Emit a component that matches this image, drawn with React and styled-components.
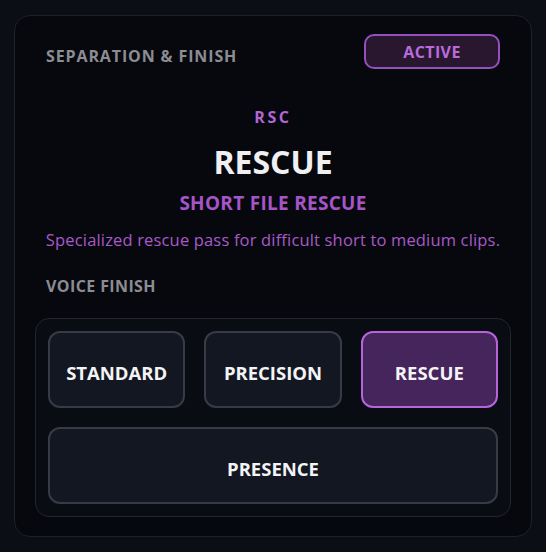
import React from "react";
import styled, { createGlobalStyle } from "styled-components";

const GlobalStyle = createGlobalStyle`
  html, body {
    margin: 0;
    padding: 0;
    background: #0b0e15;
  }
  body {
    font-family: "Open Sans", "Noto Sans", "DejaVu Sans", sans-serif;
    -webkit-font-smoothing: antialiased;
  }
  #root {
    padding: 15px 14px;
  }
`;

const Card = styled.section`
  box-sizing: border-box;
  width: 518px;
  background: #06080d;
  border: 1px solid #1d2129;
  border-radius: 16px;
  padding: 18px 20px 19px;
  display: flex;
  flex-direction: column;
`;

const Header = styled.div`
  display: flex;
  justify-content: space-between;
  align-items: flex-start;
  padding: 0 11px;
`;

const Label = styled.div`
  font-size: 16px;
  line-height: 20px;
  font-weight: 700;
  letter-spacing: ${(p) => p.$ls || "0.04em"};
  color: #8b8d93;
  margin-top: ${(p) => p.$mt || 0}px;
`;

const Badge = styled.div`
  box-sizing: border-box;
  width: 136px;
  height: 35px;
  border: 2px solid #9650bd;
  border-radius: 10px;
  background: #28172f;
  color: #b86bdc;
  font-size: 16px;
  font-weight: 700;
  letter-spacing: 0.025em;
  display: flex;
  align-items: center;
  justify-content: center;
`;

const Hero = styled.div`
  display: flex;
  flex-direction: column;
  align-items: center;
  text-align: center;
  margin-top: 38px;
`;

const Code = styled.div`
  font-size: 16px;
  line-height: 20px;
  font-weight: 700;
  letter-spacing: 0.16em;
  color: #b266d6;
`;

const Name = styled.div`
  font-size: 32px;
  line-height: 40px;
  font-weight: 700;
  color: #f0f0f3;
  margin-top: 15px;
`;

const Subtitle = styled.div`
  font-size: 19px;
  line-height: 24px;
  font-weight: 700;
  letter-spacing: 0.015em;
  color: #a655c8;
  margin-top: 9px;
`;

const Description = styled.p`
  margin: 15px 0 0;
  font-size: 16.5px;
  line-height: 20px;
  font-weight: 400;
  letter-spacing: 0.01em;
  color: #a85ac9;
`;

const Section = styled.div`
  padding: 0 11px;
  margin-top: 26px;
`;

const Group = styled.div`
  margin-top: 22px;
  border: 1px solid #22262e;
  border-radius: 14px;
  background: #090c12;
  padding: 12px;
  display: grid;
  grid-template-columns: repeat(3, 1fr);
  gap: 19px;
`;

const Option = styled.button`
  box-sizing: border-box;
  height: 77px;
  grid-column: ${(p) => (p.$wide ? "1 / -1" : "auto")};
  border-radius: 12px;
  border: 2px solid ${(p) => (p.$active ? "#b565d9" : "#383b44")};
  background: ${(p) => (p.$active ? "#46245c" : "#131721")};
  color: #f4f4f6;
  font-family: inherit;
  font-size: 18.5px;
  font-weight: 700;
  letter-spacing: 0;
  cursor: pointer;
  padding: 6px 0 0;
`;

const options = [
  { id: "standard", label: "STANDARD" },
  { id: "precision", label: "PRECISION" },
  { id: "rescue", label: "RESCUE" },
  { id: "presence", label: "PRESENCE", wide: true },
];

export default function App() {
  const active = "rescue";
  return (
    <>
      <GlobalStyle />
      <Card>
        <Header>
          <Label $mt={12} $ls="0.055em">SEPARATION &amp; FINISH</Label>
          <Badge>ACTIVE</Badge>
        </Header>
        <Hero>
          <Code>RSC</Code>
          <Name>RESCUE</Name>
          <Subtitle>SHORT FILE RESCUE</Subtitle>
          <Description>
            Specialized rescue pass for difficult short to medium clips.
          </Description>
        </Hero>
        <Section>
          <Label $ls="0.025em">VOICE FINISH</Label>
        </Section>
        <Group>
          {options.map((o) => (
            <Option key={o.id} $wide={o.wide} $active={o.id === active}>
              {o.label}
            </Option>
          ))}
        </Group>
      </Card>
    </>
  );
}
